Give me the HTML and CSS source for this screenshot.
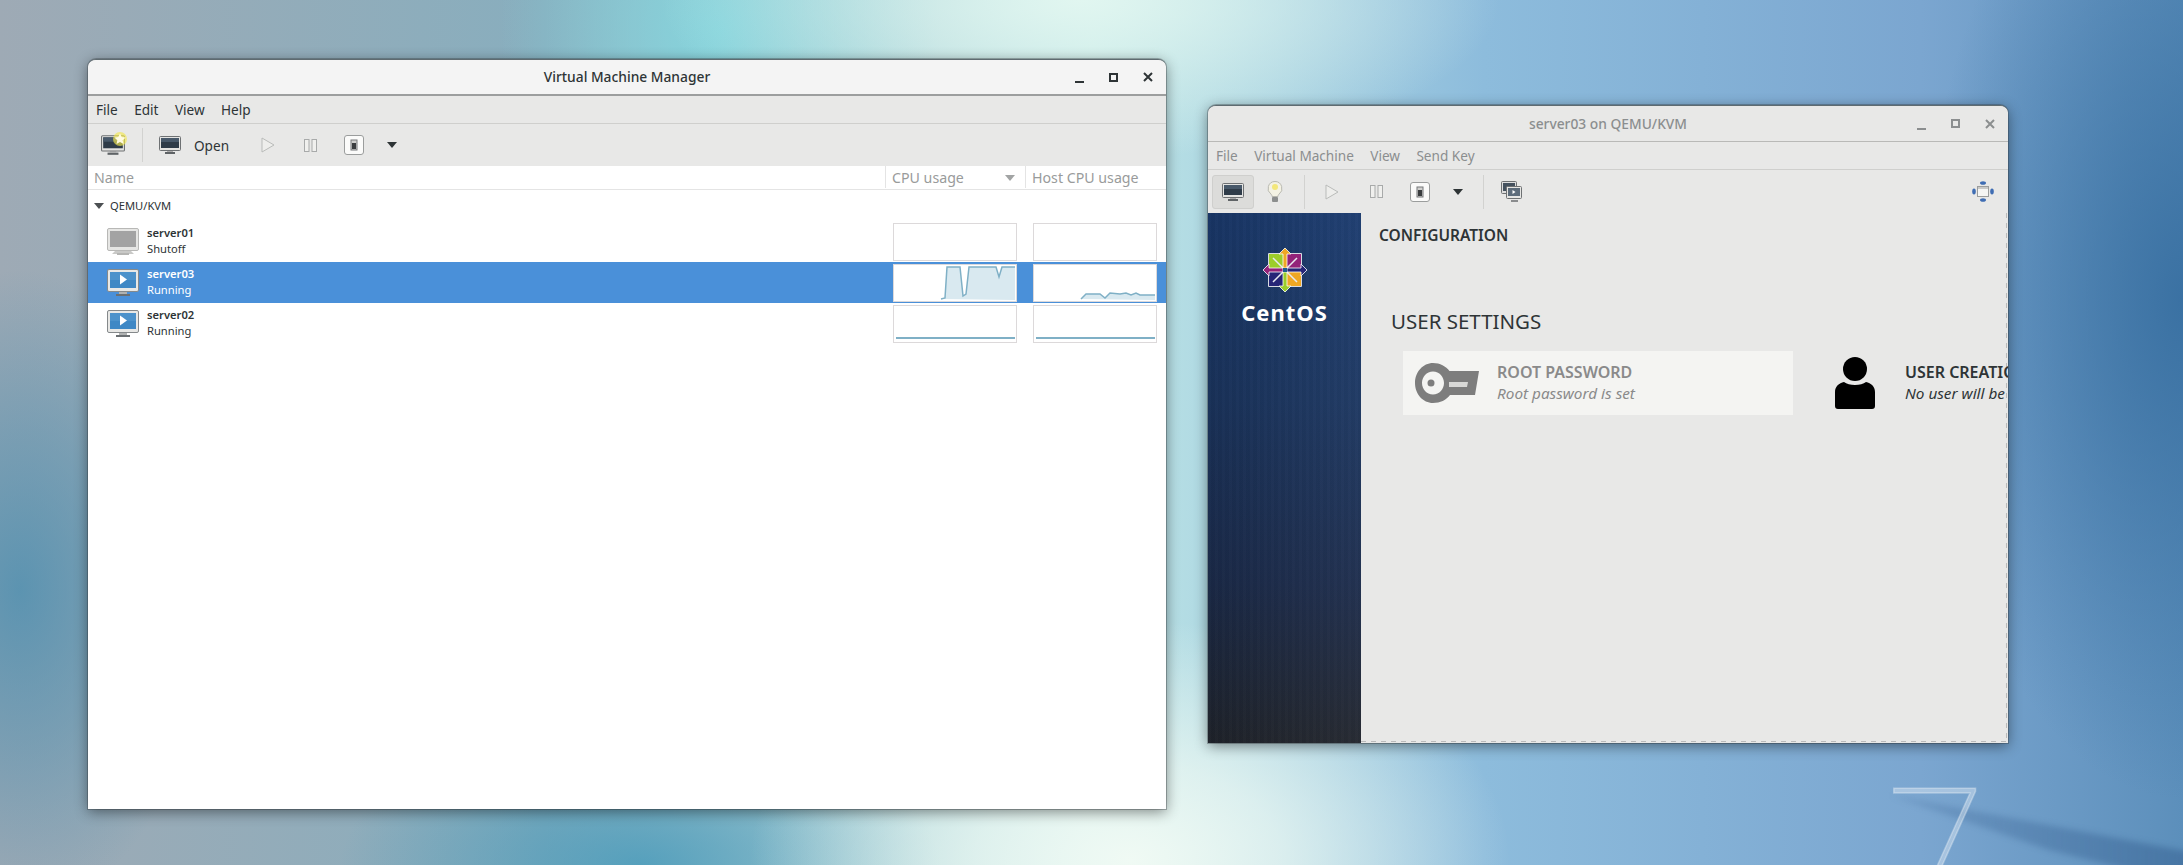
FILE: index.html
```html
<!DOCTYPE html>
<html lang="en">
<head>
    <meta charset="UTF-8">
    <title>Virtual Machine Manager</title>
    <link rel="stylesheet" href="styles.css">
</head>
<body>
    <svg class="sprite" aria-hidden="true">
        <symbol id="vm-off" viewBox="0 0 32 27">
            <path d="M8 23h16l3 3H5z" fill="#c9c9c7"/>
            <rect x="10" y="25" width="12" height="2" fill="#b5b5b3"/>
            <rect x=".5" y=".5" width="31" height="22" rx="1.5" fill="#e6e6e4" stroke="#b8b8b6"/>
            <rect x="3" y="3" width="26" height="16" fill="#a3a3a3"/>
        </symbol>
        <symbol id="vm-on" viewBox="0 0 32 27">
            <rect x="9" y="25" width="14" height="2" fill="#6b6f72"/>
            <rect x="12" y="23" width="8" height="2" fill="#b0b2b2"/>
            <rect x=".5" y=".5" width="31" height="22" rx="1.5" fill="#e8e8e6" stroke="#85898b"/>
            <rect x="3" y="3" width="26" height="16" fill="#3f88c5"/>
            <path d="M3 3h26v8H3z" fill="#5a9cd1" opacity=".5"/>
            <path d="M13 5.500l7 5-7 5z" fill="#fff"/>
        </symbol>
        <symbol id="monitor" viewBox="0 0 22 18">
            <rect x="6" y="16" width="10" height="2" fill="#5f6366"/>
            <rect x="8" y="15" width="6" height="1" fill="#aaa"/>
            <rect x=".5" y=".5" width="21" height="14" rx="1" fill="#e4e4e2" stroke="#6e7173"/>
            <rect x="2" y="2" width="18" height="10" fill="#2f3c49"/>
            <rect x="2" y="2" width="18" height="4" fill="#48596a"/>
        </symbol>
        <symbol id="play" viewBox="0 0 14 16">
            <path d="M1 1l12 7-12 7z" fill="#eeeeec" stroke="#b9bbb9"/>
        </symbol>
        <symbol id="pause" viewBox="0 0 13 13">
            <rect x=".5" y=".5" width="4.500" height="12" fill="#f0f0ee" stroke="#a8aaaa"/>
            <rect x="8" y=".5" width="4.500" height="12" fill="#f0f0ee" stroke="#a8aaaa"/>
        </symbol>
        <symbol id="power" viewBox="0 0 20 20">
            <rect x=".5" y=".5" width="19" height="19" rx="2.500" fill="#fbfbfa" stroke="#9b9d9d"/>
            <rect x="7" y="5" width="6" height="10" fill="#d0d0ce" stroke="#77797a"/>
            <rect x="8" y="8" width="4" height="6" fill="#3a3d3f"/>
        </symbol>
        <symbol id="caret" viewBox="0 0 10 6">
            <path d="M0 0h10l-5 6z"/>
        </symbol>
    </svg>

    <div class="desktop">
        <div class="swoosh"></div>
        <div class="seven">7</div>

        <div class="window manager-window">
            <div class="titlebar">
                <span class="title">Virtual Machine Manager</span>
                <div class="controls">
                    <span class="ctl ctl-min"></span>
                    <span class="ctl ctl-max"></span>
                    <svg class="ctl-close" viewBox="0 0 10 10"><path d="M1 1l8 8M9 1l-8 8"/></svg>
                </div>
            </div>
            <div class="menubar">
                <span>File</span><span>Edit</span><span>View</span><span>Help</span>
            </div>
            <div class="toolbar">
                <div class="tool tool-new">
                    <svg class="icon-monitor-lg"><use href="#monitor"/></svg>
                    <svg class="star" viewBox="0 0 14 14"><circle cx="7" cy="7" r="7" fill="#f2e84f" opacity=".65"/><path d="M7 1.500l1.700 3.600 3.900.5-2.900 2.600.8 3.800L7 10.100 3.500 12l.8-3.800L1.400 5.600l3.900-.5z" fill="#fffbe0"/></svg>
                </div>
                <span class="sep"></span>
                <div class="tool tool-open">
                    <svg class="icon-monitor"><use href="#monitor"/></svg>
                    <span>Open</span>
                </div>
                <div class="tool"><svg class="icon-play"><use href="#play"/></svg></div>
                <div class="tool"><svg class="icon-pause"><use href="#pause"/></svg></div>
                <div class="tool"><svg class="icon-power"><use href="#power"/></svg></div>
                <div class="tool tool-caret"><svg class="icon-caret"><use href="#caret"/></svg></div>
            </div>
            <div class="list-head">
                <div class="col">Name</div>
                <div class="col">CPU usage<svg class="sort-caret"><use href="#caret"/></svg></div>
                <div class="col">Host CPU usage</div>
            </div>
            <div class="list">
                <div class="group"><svg class="group-caret"><use href="#caret"/></svg>QEMU/KVM</div>

                <div class="vm-row">
                    <div class="vm-info">
                        <svg class="vm-icon"><use href="#vm-off"/></svg>
                        <div class="vm-text"><b>server01</b><span>Shutoff</span></div>
                    </div>
                    <div class="graph"></div>
                    <div class="graph"></div>
                </div>

                <div class="vm-row selected">
                    <div class="vm-info">
                        <svg class="vm-icon"><use href="#vm-on"/></svg>
                        <div class="vm-text"><b>server03</b><span>Running</span></div>
                    </div>
                    <div class="graph">
                        <svg viewBox="0 0 122 36">
                            <path class="area" d="M47 34l4-1 2-31h13l3 29 3-2 3-27h27l3 10 3-10h13v33z"/>
                            <path class="line" d="M47 34l4-1 2-31h13l3 29 3-2 3-27h27l3 10 3-10h13"/>
                        </svg>
                    </div>
                    <div class="graph">
                        <svg viewBox="0 0 122 36">
                            <path class="area" d="M47 34l5-5h14l5 4 5-5 10 1 6-1 5 2 5-2 4 2h15v5z"/>
                            <path class="line" d="M47 34l5-5h14l5 4 5-5 10 1 6-1 5 2 5-2 4 2h15"/>
                        </svg>
                    </div>
                </div>

                <div class="vm-row">
                    <div class="vm-info">
                        <svg class="vm-icon"><use href="#vm-on"/></svg>
                        <div class="vm-text"><b>server02</b><span>Running</span></div>
                    </div>
                    <div class="graph">
                        <svg viewBox="0 0 122 36"><path class="line flat" d="M2 32h119"/></svg>
                    </div>
                    <div class="graph">
                        <svg viewBox="0 0 122 36"><path class="line flat" d="M2 32h119"/></svg>
                    </div>
                </div>
            </div>
        </div>

        <div class="window console-window">
            <div class="titlebar">
                <span class="title">server03 on QEMU/KVM</span>
                <div class="controls">
                    <span class="ctl ctl-min"></span>
                    <span class="ctl ctl-max"></span>
                    <svg class="ctl-close" viewBox="0 0 10 10"><path d="M1 1l8 8M9 1l-8 8"/></svg>
                </div>
            </div>
            <div class="menubar">
                <span>File</span><span>Virtual Machine</span><span>View</span><span>Send Key</span>
            </div>
            <div class="toolbar">
                <div class="tool tool-active"><svg class="icon-monitor"><use href="#monitor"/></svg></div>
                <div class="tool tool-bulb">
                    <svg class="icon-bulb" viewBox="0 0 16 22">
                        <path d="M8 .5a7 7 0 0 0-4 12.700c.8.700 1 1.300 1 2.300h6c0-1 .2-1.600 1-2.300A7 7 0 0 0 8 .5z" fill="#f4f2e4" stroke="#b8b8b0"/>
                        <circle cx="8" cy="6" r="3" fill="#f3e77a"/>
                        <rect x="5" y="16" width="6" height="5" rx="1" fill="#8c8e8e"/>
                    </svg>
                </div>
                <span class="sep"></span>
                <div class="tool"><svg class="icon-play"><use href="#play"/></svg></div>
                <div class="tool"><svg class="icon-pause"><use href="#pause"/></svg></div>
                <div class="tool"><svg class="icon-power"><use href="#power"/></svg></div>
                <div class="tool tool-caret"><svg class="icon-caret"><use href="#caret"/></svg></div>
                <span class="sep"></span>
                <div class="tool tool-snap">
                    <svg class="icon-snap" viewBox="0 0 21 21">
                        <rect x=".5" y=".5" width="15" height="12" rx="1" fill="#dedede" stroke="#6e7173"/>
                        <rect x="2" y="2" width="12" height="8" fill="#44515e"/>
                        <rect x="5.500" y="5.500" width="15" height="12" rx="1" fill="#e6e6e4" stroke="#6e7173"/>
                        <rect x="7" y="7" width="12" height="8" fill="#5d6c7b"/>
                        <path d="M11.500 9l3 2-3 2z" fill="#fff"/>
                        <rect x="10" y="19" width="7" height="2" fill="#8a8c8e"/>
                    </svg>
                </div>
                <svg class="icon-fit" viewBox="0 0 22 21">
                    <ellipse cx="11" cy="2" rx="3" ry="1.800" fill="#3f6db3"/>
                    <ellipse cx="11" cy="19" rx="3" ry="1.800" fill="#3f6db3"/>
                    <ellipse cx="2" cy="10.500" rx="1.800" ry="3" fill="#3f6db3"/>
                    <ellipse cx="20" cy="10.500" rx="1.800" ry="3" fill="#3f6db3"/>
                    <rect x="5.500" y="5.500" width="11" height="10" fill="#f5f5f3" stroke="#9b9d9d"/>
                    <rect x="6" y="6" width="10" height="2" fill="#c9c9c7"/>
                </svg>
            </div>
            <div class="console">
                <aside class="sidebar">
                    <svg class="centos-mark" viewBox="0 0 46 46">
                        <path d="M7 7h15v15H7z" fill="#9ccd2a"/>
                        <path d="M24 7h15v15H24z" fill="#932279"/>
                        <path d="M24 24h15v15H24z" fill="#efa724"/>
                        <path d="M7 24h15v15H7z" fill="#262577"/>
                        <path d="M6.500 6.500h33v33h-33z" fill="none" stroke="#d8dbe2" stroke-width="1"/>
                        <path d="M11 11l12 12 12-12M11 35l12-12 12 12" fill="none" stroke="#e8eaef" stroke-width="1.500"/>
                        <path d="M23 1l6 6h-4v14h-4V7h-4z" fill="#efa724" stroke="#fff" stroke-width=".8"/>
                        <path d="M45 23l-6 6v-4H25v-4h14v-4z" fill="#262577" stroke="#fff" stroke-width=".8"/>
                        <path d="M23 45l-6-6h4V25h4v14h4z" fill="#9ccd2a" stroke="#fff" stroke-width=".8"/>
                        <path d="M1 23l6-6v4h14v4H7v4z" fill="#932279" stroke="#fff" stroke-width=".8"/>
                        <rect x="21" y="21" width="4" height="4" fill="#1f5f8f"/>
                    </svg>
                    <div class="centos-name">CentOS</div>
                </aside>
                <main class="hub">
                    <h2 class="hub-title">CONFIGURATION</h2>
                    <h3 class="hub-section">USER SETTINGS</h3>
                    <div class="spokes">
                        <div class="spoke spoke-done">
                            <svg class="key-icon" viewBox="0 0 64 40">
                                <path fill-rule="evenodd" d="M18 0c7 0 13 3.500 16.500 8H64l-4 24H35c-3.500 5-10 8-17 8C8 40 0 31 0 20S8 0 18 0zM18 8.500C11.500 8.500 7 14 7 20s4.500 11.500 11 11.500S29 26 29 20 24.500 8.500 18 8.500z" fill="#7d7d7d"/>
                                <path d="M34 19h19l-1 5H34z" fill="#d8d8d6"/>
                                <circle cx="16" cy="20" r="3.500" fill="#7d7d7d"/>
                            </svg>
                            <div class="spoke-text">
                                <strong>ROOT PASSWORD</strong>
                                <em>Root password is set</em>
                            </div>
                        </div>
                        <div class="spoke">
                            <svg class="person-icon" viewBox="0 0 40 52">
                                <ellipse cx="20" cy="12" rx="12" ry="12"/>
                                <path d="M9 25c2.500 2 6.500 3 11 3s8.500-1 11-3c5 1 9 4.500 9 10v14a3 3 0 0 1-3 3H3a3 3 0 0 1-3-3V35c0-5.500 4-9 9-10z"/>
                            </svg>
                            <div class="spoke-text">
                                <strong>USER CREATION</strong>
                                <em>No user will be created</em>
                            </div>
                        </div>
                    </div>
                </main>
            </div>
        </div>
    </div>
</body>
</html>
```

FILE: styles.css
```css
* { box-sizing: border-box; }
html, body { margin: 0; height: 100%; overflow: hidden; }
body { font-family: "Noto Sans", sans-serif; font-size: 13.6px; color: #2e3436; }
.sprite { position: absolute; width: 0; height: 0; }

.desktop {
    position: relative; width: 2183px; height: 865px; overflow: hidden;
    background:
        radial-gradient(ellipse 380px 240px at 1130px 860px, rgba(240,250,244,1) 0, rgba(240,250,244,.7) 40%, rgba(240,250,244,0) 100%),
        radial-gradient(ellipse 420px 160px at 1080px 0px, rgba(225,246,240,1) 0, rgba(225,246,240,0) 100%),
        radial-gradient(ellipse 220px 260px at 720px 30px, rgba(130,214,222,.9) 0, rgba(130,214,222,0) 100%),
        radial-gradient(ellipse 300px 140px at 640px 865px, rgba(60,150,185,.7) 0, rgba(60,150,185,0) 100%),
        radial-gradient(ellipse 190px 320px at 20px 590px, rgba(70,140,175,.75) 0, rgba(70,140,175,.4) 50%, rgba(70,140,175,0) 100%),
        radial-gradient(ellipse 260px 500px at 2183px 300px, rgba(55,110,160,.9) 0, rgba(55,110,160,0) 100%),
        linear-gradient(90deg, #9eaab5 0, #88aebe 25%, #bfe6e6 50%, #8dbcdc 68%, #7ba6d0 88%, #5c8fbb 100%);
}
.swoosh { position: absolute; left: 1890px; top: 790px; width: 300px; height: 100px; filter: blur(3px); }
.swoosh::before {
    content: ""; display: block; height: 100%;
    background: linear-gradient(90deg, rgba(40,80,130,.15), rgba(40,80,130,.4));
    clip-path: polygon(0 5%, 100% 62%, 100% 95%, 53% 60%);
}
.seven {
    position: absolute; left: 1887px; top: 765px;
    font-family: Roboto, sans-serif; font-weight: 100; font-size: 180px; line-height: 1;
    color: rgba(255,255,255,.35); -webkit-text-stroke: 1.5px rgba(255,255,255,.3);
}

.window {
    position: absolute; display: flex; flex-direction: column; overflow: hidden;
    border-radius: 8px 8px 0 0; border-top: 1px solid #5f6b70;
    box-shadow: 0 3px 14px rgba(0,0,0,.45), 0 0 0 1px rgba(60,70,75,.35);
    background: #e8e8e7;
}
.manager-window { left: 88px; top: 59px; width: 1078px; height: 750px; }
.console-window { left: 1208px; top: 105px; width: 800px; height: 638px; }

.titlebar {
    position: relative; display: flex; align-items: center; justify-content: center;
    height: 36px; flex: none; padding-bottom: 1px; background: #f4f4f4; border-bottom: 2px solid #9c9e9e;
}
.title { font-weight: 500; font-size: 13.8px; }
.controls { position: absolute; right: 13px; top: 0; bottom: 0; display: flex; align-items: center; gap: 25px; }
.ctl { display: block; width: 9px; height: 9px; color: #2e3436; }
.ctl-min { border-bottom: 2px solid currentColor; margin-top: 3px; }
.ctl-max { border: 2px solid currentColor; }
.ctl-close { width: 10px; height: 10px; fill: none; stroke: #2e3436; stroke-width: 2; }

.menubar { display: flex; flex: none; align-items: center; gap: 16.4px; height: 28px; padding-left: 8px; border-bottom: 1px solid #cfcfcd; }
.toolbar { display: flex; flex: none; align-items: center; height: 42px; color: #2e3436; }
.sep { width: 1px; height: 34px; background: #d2d2d0; }
.tool { display: flex; align-items: center; justify-content: center; width: 44px; height: 34px; }
.tool-new { position: relative; width: 54px; justify-content: flex-start; padding-left: 13px; }
.tool-open { width: 102px; justify-content: flex-start; padding-left: 16px; gap: 13px; }
.tool-caret { width: 32px; }
.icon-monitor-lg { width: 24px; height: 20px; }
.icon-monitor { width: 22px; height: 18px; }
.icon-play { width: 14px; height: 16px; }
.icon-pause { width: 13px; height: 13px; }
.icon-power { width: 20px; height: 20px; }
.icon-caret { width: 10px; height: 6px; fill: #2e3436; }
.star { position: absolute; left: 25px; top: 4px; width: 14px; height: 14px; }

.manager-window .icon-play { margin-left: 2px; }
.manager-window .icon-pause { margin-right: 1px; }
.manager-window .icon-power { margin-right: 2px; }
.manager-window .icon-caret { margin-right: 2px; }

.list-head { display: grid; grid-template-columns: 797px 140px 1fr; flex: none; height: 24px; padding-bottom: 1px; background: #fff; border-bottom: 1px solid #e4e4e4; color: #999b9b; font-size: 14.2px; }
.col { position: relative; display: flex; align-items: center; padding-left: 6px; }
.col + .col { border-left: 1px solid #e4e4e4; }
.sort-caret { position: absolute; right: 10px; top: 9px; width: 10px; height: 6px; fill: #a2a4a4; }

.list { flex: 1; background: #fff; font-size: 11.2px; }
.group { display: flex; align-items: center; height: 31px; padding-left: 6px; }
.group-caret { width: 10px; height: 6px; fill: #4c5053; margin-right: 6px; }
.vm-row { display: grid; grid-template-columns: 797px 140px 1fr; height: 41px; }
.vm-info { display: flex; align-items: center; padding-left: 19px; gap: 8px; }
.vm-icon { width: 32px; height: 27px; }
.vm-text { display: flex; flex-direction: column; line-height: 16px; margin-top: -2px; }
.vm-text b { font-weight: 600; }
.graph { align-self: center; width: 124px; height: 38px; margin-left: 8px; background: #fff; border: 1px solid #dcd9da; }
.graph svg { display: block; width: 122px; height: 36px; }
.area { fill: #d9e9f0; }
.line { fill: none; stroke: #7fb0c6; stroke-width: 1.5; }
.flat { stroke-width: 2; }
.selected { background: #4a90d9; color: #fff; }

.console-window .titlebar { background: #e8e8e7; border-bottom: 1px solid #b9b9b7; }
.console-window .title { color: #8b8e8f; }
.console-window .ctl { color: #8b8e8f; }
.console-window .ctl-close { stroke: #8b8e8f; }
.console-window .menubar { color: #8b8e8f; }
.console-window .toolbar { height: 43px; padding-left: 4px; }
.tool-active { width: 42px; background: #dcdcda; border: 1px solid #cfcfcd; border-radius: 3px; }
.tool-bulb { width: 42px; margin-right: 8px; }
.console-window .sep + .tool { margin-left: 5px; }
.console-window .tool-caret + .sep { margin-left: 9px; }
.console-window .tool-caret + .sep + .tool { margin-left: 0; width: 54px; }
.icon-bulb { width: 16px; height: 22px; }
.icon-snap { width: 21px; height: 21px; }
.icon-fit { width: 22px; height: 21px; margin-left: auto; margin-right: 14px; }

.console { display: flex; flex: 1; min-height: 0; }
.sidebar {
    display: flex; flex-direction: column; align-items: center; flex: none; width: 153px; padding-top: 34px;
    background:
        repeating-linear-gradient(90deg, rgba(255,255,255,.012) 0 3px, rgba(0,0,0,.018) 3px 7px),
        linear-gradient(90deg, rgba(0,0,0,.1), rgba(255,255,255,.03) 100%),
        linear-gradient(180deg, #1a3a6e 0, #1b3661 35%, #1c2c4c 70%, #21252d 100%);
}
.centos-mark { display: block; width: 46px; height: 46px; }
.centos-name { margin-top: 4px; color: #fff; font-size: 22px; font-weight: 700; line-height: 30px; letter-spacing: 1px; }

.hub {
    flex: 1; min-width: 0; overflow: hidden; padding: 10px 0 0 18px;
    background:
        repeating-linear-gradient(180deg, #bbb 0 5px, transparent 5px 10px) right 1px top 0 / 1px 100% no-repeat,
        repeating-linear-gradient(90deg, #bbb 0 5px, transparent 5px 10px) left 0 bottom 1px / 100% 1px no-repeat;
}
.hub-title { margin: 0; font-size: 15.5px; font-weight: 600; line-height: 24px; }
.hub-section { margin: 61px 0 0 12px; font-size: 20.5px; font-weight: 400; line-height: 26px; }
.spokes { display: flex; margin: 17px 0 0 24px; width: 800px; }
.spoke { display: flex; align-items: center; flex: none; width: 390px; height: 64px; padding-left: 12px; gap: 18px; }
.spoke + .spoke { margin-left: 42px; padding-left: 0; gap: 30px; }
.spoke-done { background: #f4f4f2; color: #8a8a8a; }
.key-icon { width: 64px; height: 40px; flex: none; }
.person-icon { width: 40px; height: 52px; flex: none; fill: #000; }
.spoke-text { display: flex; flex-direction: column; white-space: nowrap; line-height: 21px; font-size: 15.3px; }
.spoke-text strong { font-weight: 600; font-size: 16px; }
```
